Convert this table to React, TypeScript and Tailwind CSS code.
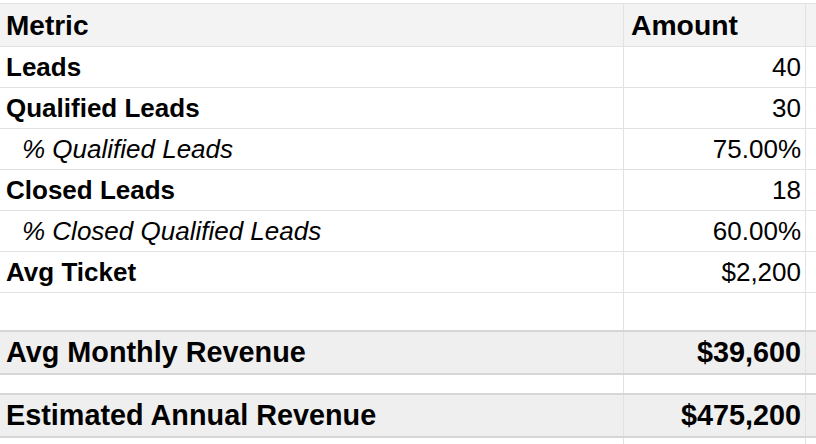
import React from "react";

type Row = {
  label: string;
  value: string;
  kind: "bold" | "italic";
};

const rows: Row[] = [
  { label: "Leads", value: "40", kind: "bold" },
  { label: "Qualified Leads", value: "30", kind: "bold" },
  { label: "% Qualified Leads", value: "75.00%", kind: "italic" },
  { label: "Closed Leads", value: "18", kind: "bold" },
  { label: "% Closed Qualified Leads", value: "60.00%", kind: "italic" },
  { label: "Avg Ticket", value: "$2,200", kind: "bold" },
];

export default function App() {
  return (
    <div
      className="w-[816px] h-[444px] overflow-hidden bg-white text-black pt-[3px]"
      style={{ fontFamily: '"Liberation Sans", Arial, sans-serif' }}
    >
      {/* Header */}
      <div className="flex h-[44px] border-y border-[#e2e2e2] bg-[#f3f3f3]">
        <div className="w-[624px] border-r border-[#e2e2e2] flex items-center pl-[6px] pt-[1px] text-[28px] font-bold">
          Metric
        </div>
        <div className="w-[182px] border-r border-[#e2e2e2] flex items-center pl-[7px] pt-[1px] text-[28.3px] font-bold">
          Amount
        </div>
        <div className="flex-1" />
      </div>

      {rows.map((r) => (
        <div key={r.label} className="flex h-[41px] border-b border-[#e2e2e2]">
          <div
            className={
              r.kind === "bold"
                ? "w-[624px] border-r border-[#e2e2e2] flex items-center pl-[6px] pt-[1px] text-[26px] font-bold"
                : "w-[624px] border-r border-[#e2e2e2] flex items-center pl-[22px] pt-[1px] text-[26px] italic"
            }
          >
            {r.label}
          </div>
          <div className="w-[182px] border-r border-[#e2e2e2] flex items-center justify-end pr-[4px] pt-[1px] text-[26px]">
            {r.value}
          </div>
          <div className="flex-1" />
        </div>
      ))}

      {/* blank row */}
      <div className="flex h-[39px] border-b-2 border-[#d6d6d6]">
        <div className="w-[624px] border-r border-[#e2e2e2]" />
        <div className="w-[182px] border-r border-[#e2e2e2]" />
        <div className="flex-1" />
      </div>

      {/* Avg Monthly Revenue */}
      <div className="flex h-[43px] border-b-2 border-[#d6d6d6] bg-[#efefef]">
        <div className="w-[624px] border-r border-[#e2e2e2] flex items-center pl-[6px] pt-[1px] text-[28.8px] font-bold">
          Avg Monthly Revenue
        </div>
        <div className="w-[182px] border-r border-[#e2e2e2] flex items-center justify-end pr-[4px] pt-[1px] text-[28.8px] font-bold">
          $39,600
        </div>
        <div className="flex-1" />
      </div>

      {/* blank row */}
      <div className="flex h-[20px] border-b-2 border-[#d6d6d6]">
        <div className="w-[624px] border-r border-[#e2e2e2]" />
        <div className="w-[182px] border-r border-[#e2e2e2]" />
        <div className="flex-1" />
      </div>

      {/* Estimated Annual Revenue */}
      <div className="flex h-[43px] border-b-2 border-[#d6d6d6] bg-[#efefef]">
        <div className="w-[624px] border-r border-[#e2e2e2] flex items-center pl-[6px] pt-[1px] text-[28.8px] font-bold">
          Estimated Annual Revenue
        </div>
        <div className="w-[182px] border-r border-[#e2e2e2] flex items-center justify-end pr-[4px] pt-[1px] text-[28.8px] font-bold">
          $475,200
        </div>
        <div className="flex-1" />
      </div>

      {/* trailing partial row */}
      <div className="flex h-[20px]">
        <div className="w-[624px] border-r border-[#e2e2e2]" />
        <div className="w-[182px] border-r border-[#e2e2e2]" />
        <div className="flex-1" />
      </div>
    </div>
  );
}
